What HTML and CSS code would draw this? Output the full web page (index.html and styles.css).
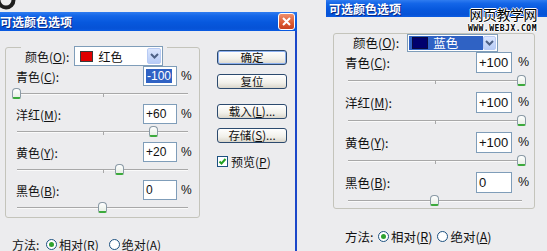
FILE: index.html
```html
<!DOCTYPE html>
<html lang="zh-CN">
<head>
    <meta charset="UTF-8">
    <meta name="viewport" content="width=device-width, initial-scale=1.0">
    <title>可选颜色选项</title>
    <link rel="stylesheet" href="styles.css">
</head>
<body>
<div class="page">

    <!-- left dialog: red -->
    <section class="win win-left">
        <div class="strip">
            <svg width="20" height="13" viewBox="0 0 20 13"><circle cx="6" cy="0" r="7.5" fill="none" stroke="#1e1e1e" stroke-width="4"/></svg>
        </div>
        <div class="titlebar">
            <span class="title">可选颜色选项</span>
            <span class="close">
                <svg width="9" height="9" viewBox="0 0 9 9"><path d="M1 1L8 8M8 1L1 8" stroke="#fff" stroke-width="2"/></svg>
            </span>
        </div>
        <div class="body">
            <div class="main">
                <div class="group">
                    <div class="group-head">
                        <span class="lbl">颜色(<u>O</u>):</span>
                        <div class="select">
                            <span class="swatch swatch-red"></span>
                            <span class="sel-text">红色</span>
                            <span class="arrow"><svg width="9" height="6" viewBox="0 0 9 6"><path d="M1 1l3.5 3.5L8 1" fill="none" stroke="#4d6185" stroke-width="2"/></svg></span>
                        </div>
                    </div>
                    <div class="row"><span class="lbl">青色(<u>C</u>):</span><span class="field"><span class="hl">-100</span></span><span class="pct">%</span></div>
                    <div class="slider"><span class="tick"></span><span class="thumb" style="left:0%"></span></div>
                    <div class="row"><span class="lbl">洋红(<u>M</u>):</span><span class="field">+60</span><span class="pct">%</span></div>
                    <div class="slider"><span class="tick"></span><span class="thumb" style="left:80%"></span></div>
                    <div class="row"><span class="lbl">黄色(<u>Y</u>):</span><span class="field">+20</span><span class="pct">%</span></div>
                    <div class="slider"><span class="tick"></span><span class="thumb" style="left:60%"></span></div>
                    <div class="row"><span class="lbl">黑色(<u>B</u>):</span><span class="field">0</span><span class="pct">%</span></div>
                    <div class="slider"><span class="tick"></span><span class="thumb" style="left:50%"></span></div>
                </div>
                <div class="buttons">
                    <span class="btn btn-default">确定</span>
                    <span class="btn">复位</span>
                    <span class="btn btn-gap">载入(<u>L</u>)...</span>
                    <span class="btn">存储(<u>S</u>)...</span>
                    <span class="check">
                        <svg width="11" height="11" viewBox="0 0 11 11"><rect x="0.5" y="0.5" width="10" height="10" fill="#fff" stroke="#1c5180"/><path d="M2.5 5.5l2 2 4-4.5" fill="none" stroke="#21a121" stroke-width="2"/></svg>
                        <span>预览(<u>P</u>)</span>
                    </span>
                </div>
            </div>
            <div class="method">
                <span class="method-lbl">方法:</span>
                <span class="opt"><span class="radio on"></span><span>相对(<u>R</u>)</span></span>
                <span class="opt"><span class="radio"></span><span>绝对(<u>A</u>)</span></span>
            </div>
        </div>
    </section>

    <!-- right dialog: blue -->
    <section class="win win-right">
        <div class="titlebar">
            <span class="title">可选颜色选项</span>
        </div>
        <div class="body">
            <div class="group">
                <div class="group-head">
                    <span class="lbl">颜色(<u>O</u>):</span>
                    <div class="select">
                        <span class="sel-hl">
                            <span class="swatch swatch-blue"></span>
                            <span class="sel-text">蓝色</span>
                        </span>
                        <span class="arrow"><svg width="9" height="6" viewBox="0 0 9 6"><path d="M1 1l3.5 3.5L8 1" fill="none" stroke="#4d6185" stroke-width="2"/></svg></span>
                    </div>
                </div>
                <div class="row"><span class="lbl">青色(<u>C</u>):</span><span class="field">+100</span><span class="pct">%</span></div>
                <div class="slider"><span class="tick"></span><span class="thumb" style="left:100%"></span></div>
                <div class="row"><span class="lbl">洋红(<u>M</u>):</span><span class="field">+100</span><span class="pct">%</span></div>
                <div class="slider"><span class="tick"></span><span class="thumb" style="left:100%"></span></div>
                <div class="row"><span class="lbl">黄色(<u>Y</u>):</span><span class="field">+100</span><span class="pct">%</span></div>
                <div class="slider"><span class="tick"></span><span class="thumb" style="left:100%"></span></div>
                <div class="row"><span class="lbl">黑色(<u>B</u>):</span><span class="field">0</span><span class="pct">%</span></div>
                <div class="slider"><span class="tick"></span><span class="thumb" style="left:50%"></span></div>
            </div>
            <div class="method">
                <span class="method-lbl">方法:</span>
                <span class="opt"><span class="radio on"></span><span>相对(<u>R</u>)</span></span>
                <span class="opt"><span class="radio"></span><span>绝对(<u>A</u>)</span></span>
            </div>
        </div>
        <div class="watermark">
            <span class="wm-cn">网页教学网</span>
            <span class="wm-en">WWW.WEBJX.COM</span>
        </div>
    </section>

</div>
</body>
</html>
```

FILE: styles.css
```css
body {
    margin: 0;
    padding: 0;
    font-family: "Noto Sans CJK SC", "Liberation Sans", sans-serif;
    font-size: 12px;
    color: #111;
}
u {
    text-decoration: underline;
    text-underline-offset: 1px;
}
.page {
    width: 547px;
    height: 251px;
    overflow: hidden;
    display: flex;
    background: #ececee;
}

/* window frame */
.win {
    display: flex;
    flex-direction: column;
    position: relative;
}
.win-left {
    width: 297px;
}
.win-right {
    width: 221px;
    margin-left: 29px;
}
.strip {
    height: 13px;
    overflow: hidden;
}
.strip svg {
    display: block;
}
.titlebar {
    display: flex;
    align-items: center;
    justify-content: space-between;
    background: linear-gradient(to bottom, #2f7cf0 0%, #1466e8 20%, #0758dd 55%, #0652d6 85%, #0a5be2 100%);
    color: #fff;
}
.win-left .titlebar {
    height: 19px;
    padding-left: 0;
    padding-right: 2px;
}
.win-right .titlebar {
    height: 17px;
    padding-left: 3px;
}
.title {
    font-weight: bold;
    font-size: 12px;
    letter-spacing: 0;
    text-shadow: 1px 1px 0 #0a2a86;
}
.close {
    width: 15px;
    height: 15px;
    border: 1px solid #fff;
    border-radius: 3px;
    background: linear-gradient(to bottom, #ee8f6c, #dc5a30 60%, #c8411f);
    display: flex;
    align-items: center;
    justify-content: center;
}

.body {
    flex: 1;
    display: flex;
    flex-direction: column;
}
.win-left .body {
    padding-left: 5px;
    border-right: 2px solid #1b47c9;
}
.win-right .body {
    padding-left: 7px;
}
.main {
    display: flex;
    align-items: flex-start;
}

/* group box */
.group {
    border: 1px solid #c4c4bb;
    border-radius: 3px;
    margin-top: 16px;
}
.win-left .group {
    width: 193px;
    padding-bottom: 4px;
}
.win-right .group {
    width: 200px;
    padding-bottom: 2px;
}
.group-head {
    display: inline-flex;
    align-items: center;
    margin: -7px 0 0 15px;
    padding: 0 4px;
    background: #ececee;
}
.win-left .group-head {
    height: 20px;
    gap: 5px;
}
.win-right .group-head {
    height: 18px;
    gap: 8px;
    font-size: 12.5px;
}
.select {
    height: 100%;
    box-sizing: border-box;
    border: 1px solid #7f9db9;
    background: #fff;
    display: flex;
    align-items: center;
}
.win-left .select {
    width: 89px;
    padding-left: 5px;
}
.win-right .select {
    width: 91px;
    padding-left: 1px;
}
.swatch {
    width: 13px;
    height: 11px;
    box-sizing: border-box;
    border: 1px solid #3a3a3a;
}
.swatch-red {
    background: #e00000;
}
.swatch-blue {
    width: 16px;
    height: 12px;
    background: #00006e;
    border-color: #0a0a40;
}
.sel-text {
    margin-left: 5px;
}
.sel-hl {
    display: flex;
    align-items: center;
    background: #2f62c4;
    color: #fff;
    height: 14px;
    width: 72px;
    padding-left: 3px;
}
.arrow {
    margin-left: auto;
    margin-right: 1px;
    width: 14px;
    height: calc(100% - 2px);
    box-sizing: border-box;
    border: 1px solid #b8cbf4;
    border-radius: 2px;
    background: linear-gradient(to bottom, #dbe6fd, #b7ccf7);
    display: flex;
    align-items: center;
    justify-content: center;
}

/* value rows */
.row {
    display: flex;
    align-items: center;
}
.lbl {
    flex: 1;
    white-space: nowrap;
}
.group-head .lbl {
    flex: none;
}
.field {
    box-sizing: border-box;
    border: 1px solid #7f9db9;
    background: #fff;
    font-family: "Liberation Sans", "Noto Sans CJK SC", sans-serif;
    display: flex;
    align-items: center;
    padding-left: 2px;
}
.hl {
    background: #2f62c4;
    color: #fff;
    padding: 0 1px;
    line-height: 14px;
}
.pct {
    width: 13px;
    font-family: "Liberation Sans", sans-serif;
}
.win-left .row {
    height: 20px;
    padding: 0 5px 0 10px;
}
.win-left .row:first-of-type {
    margin-top: 5px;
}
.win-left .field {
    width: 34px;
    height: 20px;
    font-size: 12px;
}
.win-left .pct {
    margin-left: 4px;
}
.win-right .row {
    height: 21px;
    padding: 0 3px 0 11px;
    font-size: 12.5px;
}
.win-right .row:first-of-type {
    margin-top: 7px;
}
.win-right .field {
    width: 36px;
    height: 21px;
    font-size: 13px;
}
.win-right .pct {
    margin-left: 6px;
}

/* trackbar */
.slider {
    position: relative;
    height: 11px;
}
.slider::before {
    content: "";
    position: absolute;
    left: 0;
    right: 0;
    top: 5px;
    border-top: 1px solid #a8a8a8;
    border-bottom: 1px solid #fafafa;
}
.tick {
    position: absolute;
    left: 50%;
    top: 6px;
    width: 1px;
    height: 3px;
    background: #a8a8a8;
}
.thumb {
    position: absolute;
    top: 0;
    width: 9px;
    height: 11px;
    margin-left: -5px;
    box-sizing: border-box;
    border: 1px solid #8a9aa6;
    border-bottom: 2px solid #3caa3c;
    border-radius: 4px 4px 2px 2px;
    background: linear-gradient(to bottom, #ffffff, #e8efe6);
}
.win-left .slider {
    margin: 2px 11px 5px 11px;
}
.win-left .slider:last-child {
    margin-bottom: 0;
}
.win-right .slider {
    margin: 2px 12px 6px 14px;
}
.win-right .slider:last-child {
    margin-bottom: 0;
}

/* buttons column */
.buttons {
    display: flex;
    flex-direction: column;
    margin-left: 17px;
    padding-top: 19px;
    width: 70px;
}
.btn {
    height: 15px;
    box-sizing: border-box;
    border: 1px solid #2c4a6e;
    border-radius: 3px;
    background: linear-gradient(to bottom, #ffffff, #f1f0ea 60%, #dad6cb);
    display: flex;
    align-items: center;
    justify-content: center;
    font-size: 11.5px;
    margin-bottom: 9px;
}
.btn-default {
    box-shadow: inset 0 0 0 1px #8cb0ef;
}
.btn-gap {
    margin-top: 6px;
}
.check {
    display: flex;
    align-items: center;
    gap: 3px;
    margin-top: 3px;
    height: 14px;
}

/* method row */
.method {
    display: flex;
    align-items: center;
    height: 14px;
}
.win-left .method {
    margin: 19px 0 0 7px;
}
.win-right .method {
    margin: 21px 0 0 12px;
    font-size: 12.5px;
}
.method-lbl {
    width: 34px;
}
.win-right .method-lbl {
    width: 33px;
}
.opt {
    display: flex;
    align-items: center;
    gap: 2px;
    margin-right: 10px;
}
.win-right .opt {
    margin-right: 5px;
}
.radio {
    width: 11px;
    height: 11px;
    box-sizing: border-box;
    border: 1px solid #1c5180;
    border-radius: 50%;
    background: #fff;
    display: flex;
    align-items: center;
    justify-content: center;
}
.radio.on::after {
    content: "";
    width: 5px;
    height: 5px;
    border-radius: 50%;
    background: #2fa22f;
}

/* site watermark over the title bar */
.watermark {
    position: absolute;
    right: 10px;
    top: 6px;
    display: flex;
    flex-direction: column;
    align-items: flex-end;
    gap: 2px;
    color: #000;
}
.wm-cn {
    font-size: 14px;
    line-height: 16px;
    letter-spacing: -0.5px;
    text-shadow: 1px 0 0 #fff, -1px 0 0 #fff, 0 1px 0 #fff, 0 -1px 0 #fff;
}
.wm-en {
    font-family: "DejaVu Sans Mono", monospace;
    font-weight: bold;
    font-size: 8px;
    line-height: 9px;
    letter-spacing: 0.5px;
    text-shadow: 1px 0 0 #fff, -1px 0 0 #fff, 0 1px 0 #fff, 0 -1px 0 #fff;
}
```
